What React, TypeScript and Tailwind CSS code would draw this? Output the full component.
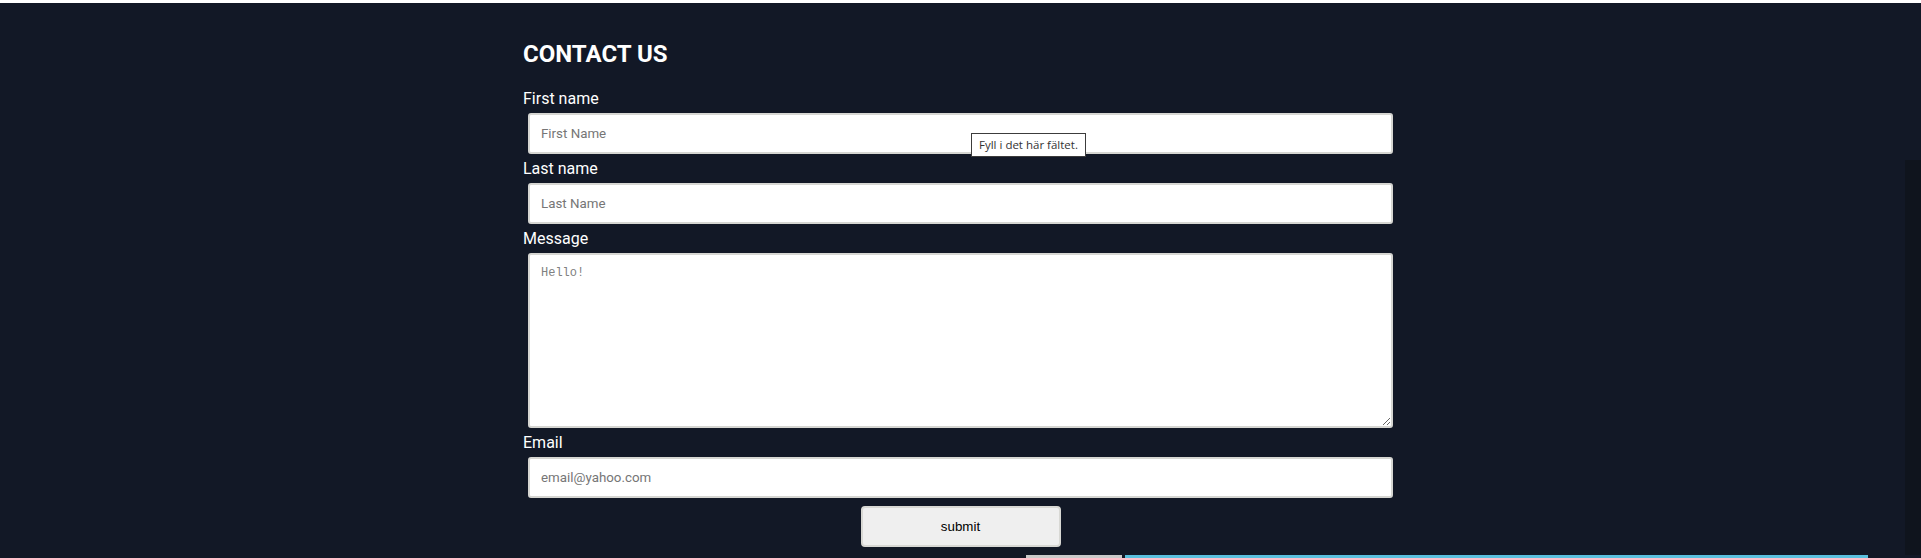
import { useState } from "react";

const FIELDS = [
  { id: "first", label: "First name", placeholder: "First Name", type: "text" },
  { id: "last", label: "Last name", placeholder: "Last Name", type: "text" },
];

const inputClass =
  "block w-[865px] mx-[5px] mt-[2px] mb-[3px] h-[41px] px-[11px] bg-white border-2 border-[#d6d6d2] rounded-[3px] text-[13.33px] text-[#222] outline-none placeholder:text-[#767676] font-['Roboto',sans-serif]";

export default function App() {
  const [values, setValues] = useState<Record<string, string>>({});

  const update = (id: string, v: string) => setValues((s) => ({ ...s, [id]: v }));

  return (
    <div className="h-[558px] overflow-hidden bg-white flex flex-col font-['Roboto',sans-serif]">
      <div className="h-[3px] shrink-0 bg-white" />

      <section className="relative flex-1 bg-[#121826] pt-[35px]">
        {/* scroll track on the right edge */}
        <div className="absolute right-0 top-[157px] bottom-0 w-[16px] bg-[#0f141d]" />

        <div className="mx-auto w-[875px]">
          <h2 className="text-2xl leading-8 font-bold text-white mb-[17px]">CONTACT US</h2>

          <form onSubmit={(e) => e.preventDefault()}>
            {FIELDS.map((f, i) => (
              <div key={f.id} className="relative">
                <label htmlFor={f.id} className="block text-base leading-6 text-white">
                  {f.label}
                </label>
                <input
                  id={f.id}
                  type={f.type}
                  placeholder={f.placeholder}
                  value={values[f.id] ?? ""}
                  onChange={(e) => update(f.id, e.target.value)}
                  className={inputClass}
                />
                {i === 0 && (
                  <div className="absolute left-[448px] top-[46px] z-10 h-[24px] px-[7px] flex items-center bg-white border border-[#3c3c3c] text-[11.5px] text-[#333] font-['Open_Sans',sans-serif] whitespace-nowrap">
                    Fyll i det här fältet.
                  </div>
                )}
              </div>
            ))}

            <label htmlFor="message" className="block text-base leading-6 text-white">
              Message
            </label>
            <textarea
              id="message"
              placeholder="Hello!"
              value={values.message ?? ""}
              onChange={(e) => update("message", e.target.value)}
              className="block w-[865px] mx-[5px] mt-[2px] mb-[3px] h-[175px] px-[11px] py-[10px] bg-white border-2 border-[#d6d6d2] rounded-[3px] text-[12px] leading-[16px] text-[#222] outline-none placeholder:text-[#808080] font-['Liberation_Mono',monospace]"
            />

            <label htmlFor="email" className="block text-base leading-6 text-white">
              Email
            </label>
            <input
              id="email"
              type="email"
              placeholder="email@yahoo.com"
              value={values.email ?? ""}
              onChange={(e) => update("email", e.target.value)}
              className={inputClass}
            />

            <div className="flex justify-center mt-[8px]">
              <button
                type="submit"
                className="w-[200px] h-[41px] bg-[#efefef] border-2 border-[#d8d8d4] rounded-[4px] text-[13.33px] text-black font-['Liberation_Sans',Arial,sans-serif]"
              >
                submit
              </button>
            </div>
          </form>
        </div>
      </section>

      {/* top edge of the next section */}
      <div className="flex h-[3px] shrink-0 bg-[#121826]">
        <div className="w-[1026px]" />
        <div className="w-[96px] bg-[#c9c9c9]" />
        <div className="w-[3px]" />
        <div className="w-[743px] bg-[#5bc0de]" />
      </div>
    </div>
  );
}
